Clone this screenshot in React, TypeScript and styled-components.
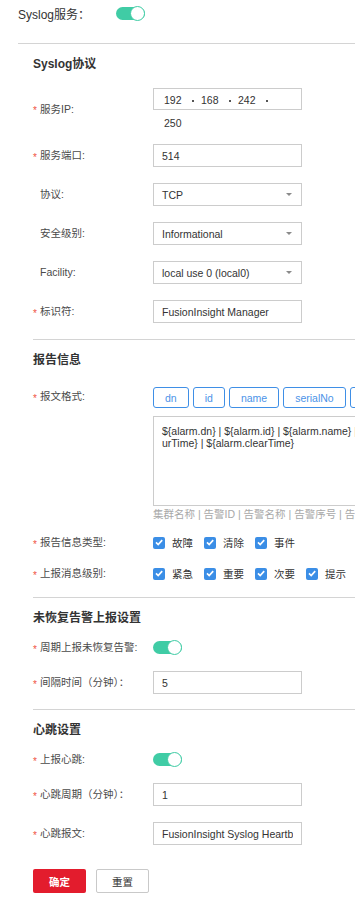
import React from "react";
import styled, { createGlobalStyle } from "styled-components";

const GlobalStyle = createGlobalStyle`
  html, body {
    margin: 0;
    padding: 0;
    background: #ffffff;
  }
  body {
    font-family: "Liberation Sans", "Noto Sans CJK SC", sans-serif;
  }
`;

const reportTags = ["dn", "id", "name", "serialNo", "occurTime", "clearTime"];
const infoTypes = ["故障", "清除", "事件"];
const levels = ["紧急", "重要", "次要", "提示"];

const CheckIcon = () => (
  <svg width="8" height="7" viewBox="0 0 8 7">
    <path d="M1 3.4 L3.2 5.5 L7.2 1.2" fill="none" stroke="#fff" strokeWidth="1.7" />
  </svg>
);

const Field = ({
  label,
  required,
  mb,
  align,
  children,
}: {
  label: string;
  required?: boolean;
  mb: number;
  align?: string;
  children: React.ReactNode;
}) => (
  <FormItem $mb={mb} $align={align}>
    <Label>
      <Star $on={!!required}>*</Star>
      {label}
    </Label>
    {children}
  </FormItem>
);

const Toggle = () => (
  <Track>
    <Knob />
  </Track>
);

const App = () => {
  return (
    <>
      <GlobalStyle />
      <Page>
        <Header>
          <HeaderTitle>Syslog服务：</HeaderTitle>
          <Toggle />
        </Header>
        <Divider $inset={18} />

        {/* Syslog协议 */}
        <Section>
          <SectionTitle $mb={14}>Syslog协议</SectionTitle>
          <Field label="服务IP:" required mb={14}>
            <IpWrap>
              <IpBox>
                {["192", "168", "242", "250"].map((part, i) => (
                  <React.Fragment key={i}>
                    <Octet>{part}</Octet>
                    {i < 3 && (
                      <DotCell>
                        <Dot />
                      </DotCell>
                    )}
                  </React.Fragment>
                ))}
              </IpBox>
            </IpWrap>
          </Field>
          <Field label="服务端口:" required mb={16}>
            <TextInput readOnly defaultValue="514" />
          </Field>
          <Field label="协议:" mb={16}>
            <Select>
              TCP
              <Caret />
            </Select>
          </Field>
          <Field label="安全级别:" mb={16}>
            <Select>
              Informational
              <Caret />
            </Select>
          </Field>
          <Field label="Facility:" mb={16}>
            <Select>
              local use 0 (local0)
              <Caret />
            </Select>
          </Field>
          <Field label="标识符:" required mb={16}>
            <TextInput readOnly defaultValue="FusionInsight Manager" />
          </Field>
        </Section>
        <Divider $inset={33} />

        {/* 报告信息 */}
        <Section>
          <SectionTitle $mb={17}>报告信息</SectionTitle>
          <Field label="报文格式:" required mb={13} align="flex-start">
            <FieldCol>
              <Tags>
                {reportTags.map((t) => (
                  <Tag key={t}>{t}</Tag>
                ))}
              </Tags>
              <FormatBox>
                {"${alarm.dn} | ${alarm.id} | ${alarm.name} | ${alarm.serialNo} | ${alarm.occ\nurTime} | ${alarm.clearTime}"}
              </FormatBox>
              <Hint>集群名称 | 告警ID | 告警名称 | 告警序号 | 告警发生时间 | 告警清除时间</Hint>
            </FieldCol>
          </Field>
          <Field label="报告信息类型:" required mb={12}>
            <CheckGroup>
              {infoTypes.map((t) => (
                <CheckOption key={t}>
                  <CheckBox>
                    <CheckIcon />
                  </CheckBox>
                  {t}
                </CheckOption>
              ))}
            </CheckGroup>
          </Field>
          <Field label="上报消息级别:" required mb={14}>
            <CheckGroup>
              {levels.map((t) => (
                <CheckOption key={t}>
                  <CheckBox>
                    <CheckIcon />
                  </CheckBox>
                  {t}
                </CheckOption>
              ))}
            </CheckGroup>
          </Field>
        </Section>
        <Divider $inset={33} />

        {/* 未恢复告警上报设置 */}
        <Section>
          <SectionTitle $mb={10}>未恢复告警上报设置</SectionTitle>
          <Field label="周期上报未恢复告警:" required mb={14}>
            <Toggle />
          </Field>
          <Field label="间隔时间（分钟）：" required mb={15}>
            <TextInput readOnly defaultValue="5" />
          </Field>
        </Section>
        <Divider $inset={33} />

        {/* 心跳设置 */}
        <Section>
          <SectionTitle $mb={10}>心跳设置</SectionTitle>
          <Field label="上报心跳:" required mb={14}>
            <Toggle />
          </Field>
          <Field label="心跳周期（分钟）：" required mb={16}>
            <TextInput readOnly defaultValue="1" />
          </Field>
          <Field label="心跳报文:" required mb={24}>
            <TextInput readOnly defaultValue="FusionInsight Syslog Heartbeat" />
          </Field>
          <Actions>
            <PrimaryButton>确定</PrimaryButton>
            <SecondaryButton>重置</SecondaryButton>
          </Actions>
        </Section>
      </Page>
    </>
  );
};

export default App;

const Page = styled.div`
  width: 355px;
  height: 899px;
  overflow: hidden;
  font-size: 10.5px;
  color: #4a4a4a;
`;

const Header = styled.div`
  display: flex;
  align-items: center;
  height: 27px;
  padding-left: 18px;
  margin-bottom: 16px;
`;

const HeaderTitle = styled.span`
  width: 98px;
  font-size: 12px;
  color: #333;
`;

const Divider = styled.div<{ $inset: number }>`
  margin-left: ${(p) => p.$inset}px;
  border-top: 1px solid #d4d4d4;
`;

const Section = styled.section`
  padding: 10px 0 0 33px;
`;

const SectionTitle = styled.h3<{ $mb: number }>`
  margin: 0 0 ${(p) => p.$mb}px;
  font-size: 12px;
  font-weight: bold;
  line-height: 20px;
  color: #333;
`;

const FormItem = styled.div<{ $mb: number; $align?: string }>`
  display: flex;
  align-items: ${(p) => p.$align || "center"};
  margin-bottom: ${(p) => p.$mb}px;
`;

const Label = styled.label`
  width: 120px;
  flex-shrink: 0;
  display: flex;
  align-items: center;
  height: 19px;
  line-height: 19px;
  white-space: nowrap;
  color: #4a4a4a;
`;

const Star = styled.span<{ $on: boolean }>`
  width: 7px;
  font-size: 10px;
  color: #f0533f;
  padding-top: 3px;
  visibility: ${(p) => (p.$on ? "visible" : "hidden")};
`;

const TextInput = styled.input`
  width: 149px;
  height: 23px;
  box-sizing: border-box;
  margin: 0;
  padding: 0 8px;
  border: 1px solid #cccccc;
  border-radius: 0;
  background: #fff;
  font-family: inherit;
  font-size: 10.5px;
  color: #333;
  outline: none;
`;

const Select = styled.div`
  width: 149px;
  height: 23px;
  box-sizing: border-box;
  padding: 0 9px 0 8px;
  border: 1px solid #cccccc;
  display: flex;
  align-items: center;
  justify-content: space-between;
  color: #333;
`;

const Caret = styled.span`
  width: 0;
  height: 0;
  border-left: 3px solid transparent;
  border-right: 3px solid transparent;
  border-top: 3px solid #8a8a8a;
`;

const IpWrap = styled.div`
  height: 42px;
`;

const IpBox = styled.div`
  width: 149px;
  height: 22px;
  box-sizing: border-box;
  padding: 0 10px;
  border: 1px solid #cccccc;
  display: flex;
  flex-wrap: wrap;
  align-content: flex-start;
  color: #333;
`;

const Octet = styled.span`
  width: 20px;
  line-height: 23px;
`;

const DotCell = styled.span`
  width: 17px;
  height: 23px;
  display: flex;
  align-items: center;
  justify-content: center;
`;

const Dot = styled.span`
  width: 2px;
  height: 2px;
  background: #555;
`;

const FieldCol = styled.div`
  display: flex;
  flex-direction: column;
  min-width: 0;
`;

const Tags = styled.div`
  display: flex;
  gap: 4px;
  height: 21px;
`;

const Tag = styled.button`
  flex-shrink: 0;
  height: 21px;
  margin: 0;
  padding: 0 11px;
  border: 1px solid #3f8fe6;
  border-radius: 3px;
  background: #fff;
  font-family: inherit;
  font-size: 10.5px;
  color: #4b93e8;
`;

const FormatBox = styled.div`
  width: 420px;
  height: 90px;
  margin-top: 8px;
  box-sizing: border-box;
  padding: 8px 8px;
  border: 1px solid #cccccc;
  line-height: 12px;
  color: #333;
  white-space: pre;
`;

const Hint = styled.div`
  margin-top: 2px;
  line-height: 12px;
  color: #a8a8a8;
  white-space: nowrap;
`;

const CheckGroup = styled.div`
  display: flex;
  align-items: center;
  height: 19px;
`;

const CheckOption = styled.span`
  display: flex;
  align-items: center;
  gap: 7px;
  margin-right: 11px;
  color: #333;
  white-space: nowrap;
`;

const CheckBox = styled.span`
  width: 12px;
  height: 12px;
  border-radius: 2px;
  background: #3b8ee6;
  display: flex;
  align-items: center;
  justify-content: center;
`;

const Track = styled.span`
  position: relative;
  display: inline-block;
  width: 29px;
  height: 13px;
  border-radius: 7px;
  background: #40cca5;
`;

const Knob = styled.span`
  position: absolute;
  right: 0;
  top: -1px;
  width: 15px;
  height: 15px;
  box-sizing: border-box;
  border-radius: 50%;
  border: 1.5px solid #40cca5;
  background: #fff;
`;

const Actions = styled.div`
  display: flex;
  gap: 10px;
`;

const PrimaryButton = styled.button`
  width: 53px;
  height: 24px;
  margin: 0;
  border: none;
  border-radius: 2px;
  background: #e31c2d;
  color: #fff;
  font-family: inherit;
  font-size: 10.5px;
  font-weight: bold;
`;

const SecondaryButton = styled.button`
  width: 53px;
  height: 24px;
  margin: 0;
  border: 1px solid #c9c9c9;
  border-radius: 2px;
  background: #fff;
  color: #333;
  font-family: inherit;
  font-size: 10.5px;
`;
